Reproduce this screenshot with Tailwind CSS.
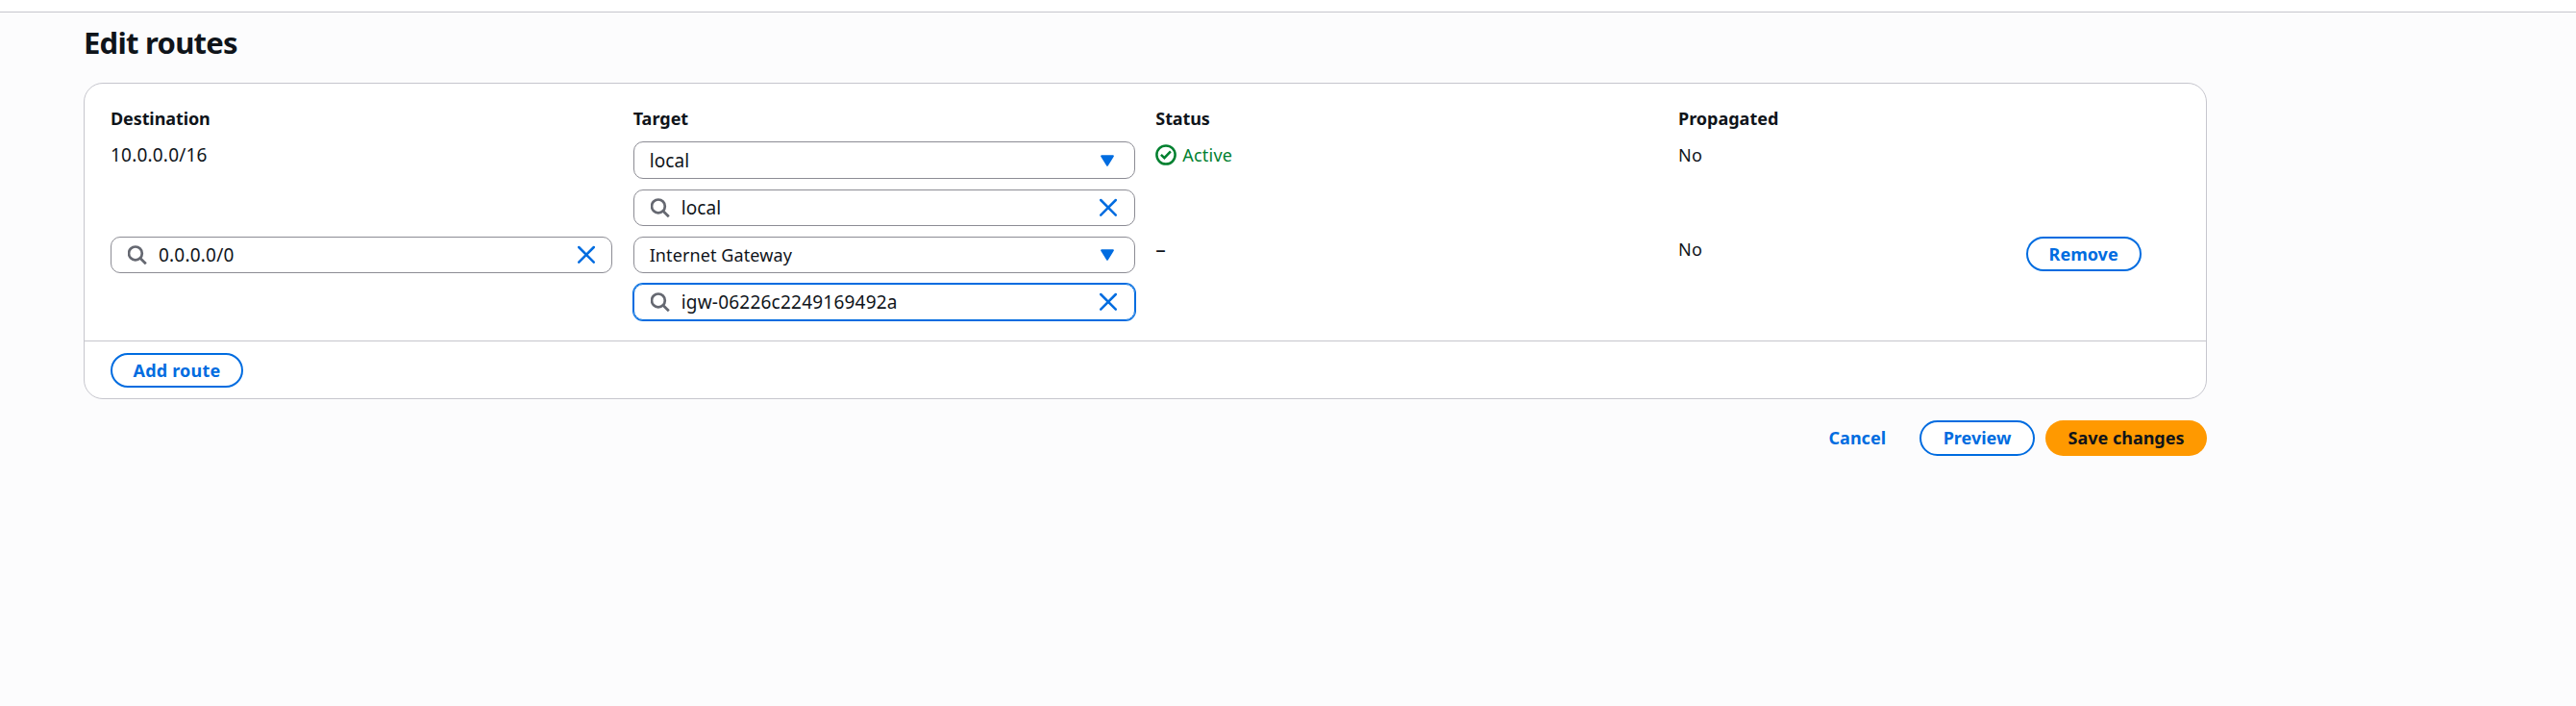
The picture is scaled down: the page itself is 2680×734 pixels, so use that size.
<!DOCTYPE html>
<html lang="en">
<head>
<meta charset="utf-8">
<title>Edit routes</title>
<script src="https://cdn.jsdelivr.net/npm/@tailwindcss/browser@4"></script>
</head>
<body class="min-h-screen bg-[#fcfcfd] font-['Noto_Sans','Open_Sans',sans-serif] text-[18px] leading-[25px] text-[#0f141a]">
<svg class="hidden">
  <symbol id="search" viewBox="0 0 20 20"><g fill="none" stroke="#656871" stroke-width="2.7"><circle cx="7.9" cy="8.4" r="6.9"/><path d="M12.7 13.2L18.8 19.3"/></g></symbol>
  <symbol id="close" viewBox="0 0 20 20"><path d="M2.2 2L17.8 17.6M17.8 2L2.2 17.6" fill="none" stroke="#006ce0" stroke-width="2.5" stroke-linecap="round"/></symbol>
  <symbol id="caret" viewBox="0 0 20 20"><path d="M4.1 5.3H15.9L10 14.8Z" fill="#006ce0" stroke="#006ce0" stroke-width="2" stroke-linejoin="round"/></symbol>
</svg>
<div class="h-[13px] border-b border-[#c6c6cd] bg-white"></div>
<main class="ml-[87px] w-[2209px]">
  <h1 class="mt-[13px] h-[60px] text-[31px] font-bold leading-[37px] tracking-[-0.74px]">Edit routes</h1>
  <section class="h-[329px] rounded-[20px] border border-[#c6c6cd] bg-white">
    <div class="h-[268px] border-b border-[#c6c6cd] pl-[27px] pt-[24px]">
      <div class="grid h-[36px] grid-cols-[522px_522px_522px_340px] gap-x-[21.67px] font-bold">
        <div class="tracking-[-0.1px]">Destination</div>
        <div>Target</div>
        <div class="tracking-[-0.1px]">Status</div>
        <div>Propagated</div>
      </div>
      <div class="grid h-[99px] grid-cols-[522px_522px_522px_340px] gap-x-[21.67px]">
        <div class="pt-[2px] text-[19px] leading-[25px] tracking-[0.2px]">10.0.0.0/16</div>
        <div class="flex flex-col gap-[11px]">
          <div class="flex h-[39px] items-center justify-between rounded-[10px] border border-[#8c8c94] px-[16px]"><span class="pt-[1px] text-[19px] leading-[25px] tracking-[0.1px]">local</span><svg class="mr-[2px] size-5"><use href="#caret"/></svg></div>
          <div class="flex h-[38px] items-center rounded-[10px] border border-[#8c8c94] px-[17px]"><svg class="size-5"><use href="#search"/></svg><span class="ml-[12px] grow text-[19px] leading-[25px] tracking-[0.1px]">local</span><svg class="size-5"><use href="#close"/></svg></div>
        </div>
        <div class="flex items-start gap-[6px] pt-[2px] text-[#00802f]">
          <svg class="mt-[1px] size-[22px]" viewBox="0 0 22 22" fill="none" stroke="#00802f" stroke-width="2.5"><circle cx="11" cy="11" r="9.6"/><path d="M5.9 10.8L9.4 14.2L15.9 7.4"/></svg>
          <span class="tracking-[0.21px]">Active</span>
        </div>
        <div class="pt-[2px] tracking-[0.3px]">No</div>
      </div>
      <div class="grid grid-cols-[522px_522px_522px_340px_120px] gap-x-[21.67px]">
        <div>
          <div class="flex h-[38px] items-center rounded-[10px] border border-[#8c8c94] pl-[17px] pr-[16px]"><svg class="size-5"><use href="#search"/></svg><span class="ml-[12px] grow text-[19px] leading-[25px] tracking-[0.2px]">0.0.0.0/0</span><svg class="size-5"><use href="#close"/></svg></div>
        </div>
        <div class="flex flex-col gap-[11px]">
          <div class="flex h-[38px] items-center justify-between rounded-[10px] border border-[#8c8c94] px-[16px]"><span class="pt-[1px] tracking-[0.1px]">Internet Gateway</span><svg class="mr-[2px] size-5"><use href="#caret"/></svg></div>
          <div class="flex h-[38px] items-center rounded-[10px] border border-[#006ce0] px-[17px] ring-1 ring-[#006ce0]"><svg class="size-5"><use href="#search"/></svg><span class="ml-[12px] grow text-[19px] leading-[25px] tracking-[0.22px]">igw-06226c2249169492a</span><svg class="size-5"><use href="#close"/></svg></div>
        </div>
        <div class="pt-[1px] text-[21px] leading-[25px]">–</div>
        <div class="pt-[1px] tracking-[0.3px]">No</div>
        <button class="flex h-[36px] items-center justify-center rounded-full border-2 border-[#006ce0] pt-[1px] font-bold text-[#006ce0]">Remove</button>
      </div>
    </div>
    <div class="pl-[27px] pt-[12px]">
      <button class="flex h-[36px] w-[138px] items-center justify-center rounded-full border-2 border-[#006ce0] pt-[1px] font-bold tracking-[0.2px] text-[#006ce0]">Add route</button>
    </div>
  </section>
  <div class="mt-[22px] flex h-[37px] items-stretch justify-end font-bold">
    <button class="mr-[35px] text-[#006ce0]">Cancel</button>
    <button class="mr-[11px] w-[120px] rounded-full border-2 border-[#006ce0] bg-white text-[#006ce0]">Preview</button>
    <button class="w-[168px] rounded-full bg-[#ff9900]">Save changes</button>
  </div>
</main>
</body>
</html>
